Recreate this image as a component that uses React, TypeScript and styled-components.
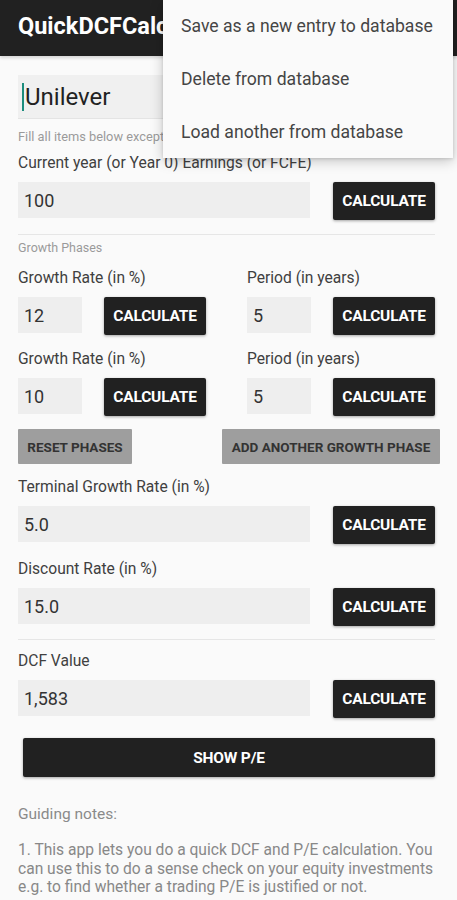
import styled, { createGlobalStyle } from "styled-components";

const GlobalStyle = createGlobalStyle`
  body {
    margin: 0;
    background: #fafafa;
    font-family: Roboto, "Noto Sans", sans-serif;
  }
`;

const MENU_ITEMS = [
  "Save as a new entry to database",
  "Delete from database",
  "Load another from database",
];

type FieldProps = {
  label: string;
  value: string;
  top?: number;
};

const FullField = ({ label, value, top = 14 }: FieldProps) => (
  <>
    <Label $top={top}>{label}</Label>
    <Row>
      <ValueBox>{value}</ValueBox>
      <CalcButton>CALCULATE</CalcButton>
    </Row>
  </>
);

const PhaseGroup = ({ value }: { value: string }) => (
  <Group>
    <ValueBox>{value}</ValueBox>
    <CalcButton>CALCULATE</CalcButton>
  </Group>
);

const PhaseRow = ({ rate, period, top }: { rate: string; period: string; top: number }) => (
  <>
    <HalfLabels $top={top}>
      <Label>Growth Rate (in %)</Label>
      <Label>Period (in years)</Label>
    </HalfLabels>
    <HalfRow>
      <PhaseGroup value={rate} />
      <PhaseGroup value={period} />
    </HalfRow>
  </>
);

const App = () => {
  return (
    <Page>
      <GlobalStyle />
      <AppBar>
        <Title>QuickDCFCalculator</Title>
      </AppBar>
      <Content>
        <NameInput>
          <Cursor />
          Unilever
        </NameInput>
        <Hint>Fill all items below except DCF Value and press CALCULATE</Hint>
        <FullField
          label="Current year (or Year 0) Earnings (or FCFE)"
          value="100"
          top={10}
        />
        <Divider $top={12} />
        <SectionTitle>Growth Phases</SectionTitle>
        <PhaseRow rate="12" period="5" top={14} />
        <PhaseRow rate="10" period="5" top={13} />
        <PhaseActions>
          <GreyButton>RESET PHASES</GreyButton>
          <GreyButton $wide>ADD ANOTHER GROWTH PHASE</GreyButton>
        </PhaseActions>
        <FullField label="Terminal Growth Rate (in %)" value="5.0" />
        <FullField label="Discount Rate (in %)" value="15.0" />
        <Divider $top={11} />
        <FullField label="DCF Value" value="1,583" top={12} />
        <WideButton>SHOW P/E</WideButton>
        <NotesTitle>Guiding notes:</NotesTitle>
        <Notes>
          1. This app lets you do a quick DCF and P/E calculation. You can use
          this to do a sense check on your equity investments e.g. to find
          whether a trading P/E is justified or not.
        </Notes>
      </Content>
      <Menu>
        {MENU_ITEMS.map((item) => (
          <MenuItem key={item}>{item}</MenuItem>
        ))}
      </Menu>
    </Page>
  );
};

export default App;

const Page = styled.div`
  position: relative;
  width: 457px;
  height: 900px;
  overflow: hidden;
  background: #fafafa;
`;

const AppBar = styled.div`
  height: 56px;
  background: #212121;
  display: flex;
  align-items: center;
  padding-left: 18px;
  box-shadow: 0 2px 3px rgba(0, 0, 0, 0.15);
`;

const Title = styled.div`
  width: 145px;
  overflow: hidden;
  color: #ffffff;
  font-size: 23.5px;
  font-weight: 700;
  white-space: nowrap;
  margin-top: -4px;
`;

const Menu = styled.div`
  position: absolute;
  top: 0;
  left: 163px;
  width: 290px;
  height: 158px;
  background: #fafafa;
  box-shadow: 0 3px 12px rgba(0, 0, 0, 0.22), 0 1px 3px rgba(0, 0, 0, 0.12);
  display: flex;
  flex-direction: column;
`;

const MenuItem = styled.div`
  height: 53px;
  display: flex;
  align-items: center;
  padding-left: 18px;
  font-size: 17.6px;
  color: #454545;
  white-space: nowrap;
`;

const Content = styled.div`
  padding: 19px 22px 0 18px;
  display: flex;
  flex-direction: column;
`;

const NameInput = styled.div`
  height: 43px;
  background: #f0f0f0;
  border-bottom: 1px solid #e4e4e4;
  display: flex;
  align-items: center;
  padding-left: 4px;
  font-size: 24px;
  color: #222;
`;

const Cursor = styled.span`
  display: inline-block;
  width: 2px;
  height: 28px;
  background: #1c8d7d;
  margin-right: 1px;
`;

const Hint = styled.div`
  width: 145px;
  overflow: hidden;
  margin-top: 11px;
  font-size: 12.8px;
  line-height: 14px;
  color: #9a9a9a;
  white-space: nowrap;
`;

const Label = styled.div<{ $top?: number }>`
  margin-top: ${(p) => p.$top ?? 0}px;
  margin-bottom: 10px;
  font-size: 15.6px;
  line-height: 18px;
  color: #404040;
  white-space: nowrap;
`;

const HalfLabels = styled.div<{ $top: number }>`
  margin-top: ${(p) => p.$top}px;
  display: grid;
  grid-template-columns: 1fr 1fr;
  column-gap: 41px;
`;

const Row = styled.div`
  height: 40px;
  display: flex;
  align-items: flex-start;
  gap: 23px;
`;

const HalfRow = styled.div`
  height: 40px;
  display: grid;
  grid-template-columns: 1fr 1fr;
  column-gap: 41px;
`;

const Group = styled.div`
  display: flex;
  align-items: flex-start;
  gap: 22px;
`;

const ValueBox = styled.div`
  flex: 1;
  height: 36px;
  background: #eeeeee;
  display: flex;
  align-items: center;
  padding-left: 6px;
  font-size: 18px;
  color: #333;
`;

const CalcButton = styled.button`
  width: 102px;
  height: 38px;
  flex-shrink: 0;
  background: #212121;
  color: #ffffff;
  border: none;
  border-radius: 2px;
  box-shadow: 0 1px 3px rgba(0, 0, 0, 0.35);
  font-family: Roboto, sans-serif;
  font-size: 15.5px;
  font-weight: 700;
  letter-spacing: -0.2px;
  padding: 0;
`;

const Divider = styled.div<{ $top: number }>`
  margin-top: ${(p) => p.$top}px;
  height: 1px;
  background: #e6e6e6;
`;

const SectionTitle = styled.div`
  margin-top: 6px;
  font-size: 12.5px;
  line-height: 14px;
  color: #9a9a9a;
`;

const PhaseActions = styled.div`
  margin-top: 11px;
  margin-right: -5px;
  display: flex;
  justify-content: space-between;
`;

const GreyButton = styled.button<{ $wide?: boolean }>`
  width: ${(p) => (p.$wide ? 218 : 114)}px;
  height: 35px;
  background: #9e9e9e;
  color: #333;
  border: none;
  border-radius: 1px;
  font-family: Roboto, sans-serif;
  font-size: 13.5px;
  font-weight: 700;
  padding: 0;
  white-space: nowrap;
`;

const WideButton = styled.button`
  margin: 18px 0 0 5px;
  height: 39px;
  background: #212121;
  color: #ffffff;
  border: none;
  border-radius: 2px;
  box-shadow: 0 1px 3px rgba(0, 0, 0, 0.35);
  font-family: Roboto, sans-serif;
  font-size: 15.5px;
  font-weight: 700;
  letter-spacing: -0.2px;
`;

const NotesTitle = styled.div`
  margin-top: 28px;
  font-size: 15.5px;
  line-height: 18px;
  color: #8a8a8a;
`;

const Notes = styled.p`
  margin: 18px -4px 0 0;
  font-size: 15.6px;
  line-height: 18.5px;
  color: #888;
`;
